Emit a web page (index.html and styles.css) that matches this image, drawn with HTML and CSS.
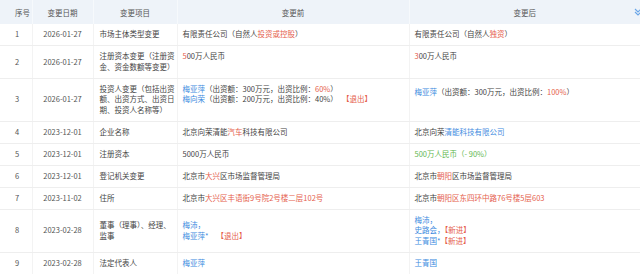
FILE: index.html
```html
<!DOCTYPE html>
<html lang="zh">
<head>
<meta charset="utf-8">
<link rel="stylesheet" href="styles.css">
</head>
<body>
<table class="grid">
  <colgroup>
    <col class="c-no"><col class="c-date"><col class="c-item"><col class="c-before"><col class="c-after">
  </colgroup>
  <thead>
    <tr>
      <th class="no">序号</th>
      <th>变更日期</th>
      <th>变更项目</th>
      <th>变更前</th>
      <th class="last">变更后<svg class="fold" viewBox="0 0 10 10" width="10" height="10"><path d="M2 2 L5 5 L8 2 M2 5 L5 8 L8 5" fill="none" stroke="#6aa6e8" stroke-width="1.1"/></svg></th>
    </tr>
  </thead>
  <tbody>
    <tr>
      <td class="no">1</td><td class="date">2026-01-27</td>
      <td class="item">市场主体类型变更</td>
      <td class="val">有限责任公司（自然人<span class="r">投资或控股</span>）</td>
      <td class="val">有限责任公司（自然人<span class="r">独资</span>）</td>
    </tr>
    <tr>
      <td class="no">2</td><td class="date">2026-01-27</td>
      <td class="item">注册资本变更（注册资<br>金、资金数额等变更）</td>
      <td class="val top"><span class="r">5</span>00万人民币</td>
      <td class="val top"><span class="r">3</span>00万人民币</td>
    </tr>
    <tr>
      <td class="no">3</td><td class="date">2026-01-27</td>
      <td class="item">投资人变更（包括出资<br>额、出资方式、出资日<br>期、投资人名称等）</td>
      <td class="val top"><span class="b">梅亚萍</span>（出资额：300万元，出资比例：<span class="r">60%</span>）<br><span class="b">梅向荣</span>（出资额：200万元，出资比例：40%）<span class="r tag">【退出】</span></td>
      <td class="val top shift"><span class="b">梅亚萍</span>（出资额：300万元，出资比例：<span class="r">100%</span>）</td>
    </tr>
    <tr>
      <td class="no">4</td><td class="date">2023-12-01</td>
      <td class="item">企业名称</td>
      <td class="val">北京向荣清能<span class="r">汽车</span>科技有限公司</td>
      <td class="val">北京向荣<span class="b">清能科技有限公司</span></td>
    </tr>
    <tr>
      <td class="no">5</td><td class="date">2023-12-01</td>
      <td class="item">注册资本</td>
      <td class="val">5000万人民币</td>
      <td class="val g">500万人民币（- 90%）</td>
    </tr>
    <tr>
      <td class="no">6</td><td class="date">2023-12-01</td>
      <td class="item">登记机关变更</td>
      <td class="val">北京市<span class="r">大兴</span>区市场监督管理局</td>
      <td class="val">北京市<span class="r">朝阳</span>区市场监督管理局</td>
    </tr>
    <tr>
      <td class="no">7</td><td class="date">2023-11-02</td>
      <td class="item">住所</td>
      <td class="val">北京市<span class="r">大兴区丰语街9号院2号楼二层102号</span></td>
      <td class="val">北京市<span class="r">朝阳区东四环中路76号楼5层603</span></td>
    </tr>
    <tr>
      <td class="no">8</td><td class="date">2023-02-28</td>
      <td class="item">董事（理事）、经理、<br>监事</td>
      <td class="val"><span class="b">梅沛，</span><br><span class="b">梅亚萍*</span><span class="r tag">【退出】</span></td>
      <td class="val"><span class="b">梅沛，</span><br><span class="b">史路会，</span><span class="r">【新进】</span><br><span class="b">王青国*</span><span class="r">【新进】</span></td>
    </tr>
    <tr>
      <td class="no">9</td><td class="date">2023-02-28</td>
      <td class="item">法定代表人</td>
      <td class="val"><span class="b">梅亚萍</span></td>
      <td class="val"><span class="b">王青国</span></td>
    </tr>
  </tbody>
</table>
</body>
</html>
```
FILE: styles.css
```css
html, body {
  margin: 0;
  padding: 0;
  background: #fff;
}
body {
  font-family: "Noto Sans CJK SC", "Noto Sans", sans-serif;
  font-size: 7.5px;
  color: #444;
  overflow: hidden;
}
.grid {
  width: 640px;
  border-collapse: collapse;
  table-layout: fixed;
}
.c-no { width: 32px; }
.c-date { width: 61px; }
.c-item { width: 84px; }
.c-before { width: 232px; }
.c-after { width: 231px; }

th {
  height: 24px;
  padding: 0;
  background: #eef3f9;
  font-weight: normal;
  color: #555;
  text-align: center;
  border-right: 1px solid #f6f9fc;
}
th.no { text-align: left; padding-left: 15px; }
th.last { position: relative; border-right: none; }
.fold {
  position: absolute;
  right: -3px;
  top: 7px;
}
td {
  height: 10.5px;
  padding: 5.25px 4px 5.25px 5px;
  line-height: 10.5px;
  border-bottom: 1px solid #eeeeee;
  border-right: 1px solid #f3f3f3;
  vertical-align: middle;
  white-space: nowrap;
  overflow: hidden;
}
td:last-child { border-right: none; }
td.no { padding-left: 15px; color: #555; }
td.date { text-align: center; padding-left: 0; padding-right: 0; color: #555; }
td.item { padding-left: 6px; }
td.top { vertical-align: top; }
td.shift { padding-top: 8px; }
.r { color: #e5604c; }
.b { color: #3d8be0; }
.g { color: #62b84f; }
.tag { margin-left: 8px; }
```
